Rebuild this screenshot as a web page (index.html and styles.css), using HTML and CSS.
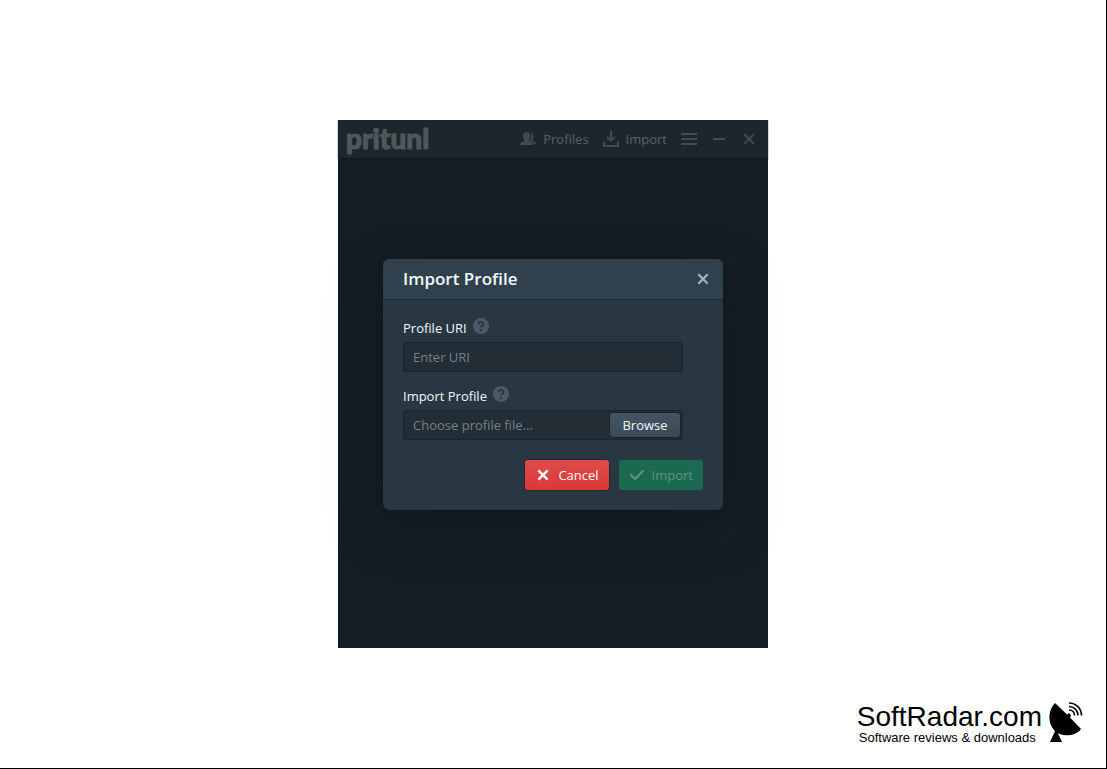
FILE: index.html
```html
<!DOCTYPE html>
<html lang="en">
<head>
    <meta charset="UTF-8">
    <meta name="viewport" content="width=device-width, initial-scale=1.0">
    <title>Pritunl Client</title>
    <link rel="stylesheet" href="styles.css">
</head>
<body>
    <main class="window">
        <header class="navbar">
            <h1 class="logo">pritunl</h1>
            <nav class="nav-items">
                <button type="button" class="nav-button">
                    <svg class="icon" width="16" height="16" viewBox="0 0 16 16">
                        <path d="M10.6 10.900c-1.500-.5-1.900-.9-1.900-1.600.5-.6.8-1.300 1-2.100.4-.3.6-.9.6-1.500 0-.4-.1-.8-.4-1V3.800C9.800 2.200 8.500 1.300 6.500 1.300S3.200 2.200 3.200 3.800v.9c-.3.2-.4.6-.4 1 0 .6.2 1.200.6 1.500.2.8.5 1.500 1 2.100 0 .7-.4 1.100-1.900 1.600C.9 11.500 0 12.200 0 14h13c0-1.800-.9-2.500-2.400-3.100z"/>
                        <path d="M10.200 2c2 0 3.100.9 3.100 2.400v.8c.6.6.4 1.800-.2 2.300-.2.8-.5 1.300-.9 1.700 0 .7.5 1 1.600 1.400 1.500.5 2.200 1.100 2.200 2.400h-2.300c-.3-1.300-1.200-2-2.700-2.600-.8-.3-1.100-.5-1.200-.8.4-.5.7-1.100.9-1.800.6-.6.8-1.900.3-2.700V3.700c0-.7-.3-1.200-.8-1.700z"/>
                    </svg>
                    Profiles
                </button>
                <button type="button" class="nav-button">
                    <svg class="icon" width="16" height="16" viewBox="0 0 16 16">
                        <path d="M7 0h2v7.200l2.300-2.200 1.400 1.400L8 11.100 3.300 6.400 4.700 5 7 7.200zM0 11h2v3h12v-3h2v5H0z"/>
                    </svg>
                    Import
                </button>
                <button type="button" class="nav-button" aria-label="Menu">
                    <svg class="icon" width="16" height="16" viewBox="0 0 16 16">
                        <path d="M0 2h16v2H0zM0 7h16v2H0zM0 12h16v2H0z"/>
                    </svg>
                </button>
                <button type="button" class="nav-button" aria-label="Minimize">
                    <svg class="icon" width="16" height="16" viewBox="0 0 16 16">
                        <path d="M2 7h12v2H2z"/>
                    </svg>
                </button>
                <button type="button" class="nav-button" aria-label="Close window">
                    <svg class="icon" width="16" height="16" viewBox="0 0 16 16">
                        <path d="M4 2.600l4 3.900 4-3.900L13.400 4 9.500 8l3.900 4-1.400 1.400-4-3.900-4 3.900L2.600 12l3.900-4-3.900-4z"/>
                    </svg>
                </button>
            </nav>
        </header>

        <section class="content">
            <form class="dialog">
                <div class="dialog-header">
                    <h2>Import Profile</h2>
                    <button type="button" class="dialog-close" aria-label="Close">
                        <svg class="icon" width="16" height="16" viewBox="0 0 16 16">
                            <path d="M4 2.600l4 3.900 4-3.900L13.400 4 9.500 8l3.900 4-1.400 1.400-4-3.900-4 3.900L2.600 12l3.900-4-3.900-4z"/>
                        </svg>
                    </button>
                </div>
                <div class="dialog-body">
                    <div class="form-group">
                        <div class="label-row">
                            <label for="uri">Profile URI</label>
                            <svg class="help" width="16" height="16" viewBox="0 0 16 16">
                                <circle cx="8" cy="8" r="8"/>
                                <path d="M5.500 6.300C5.500 3.200 10.500 3.200 10.500 6.100 10.500 7.900 8 7.900 8 9.600M8 11v2"/>
                            </svg>
                        </div>
                        <input type="text" id="uri" class="field" placeholder="Enter URI">
                    </div>
                    <div class="form-group">
                        <div class="label-row">
                            <label for="file">Import Profile</label>
                            <svg class="help" width="16" height="16" viewBox="0 0 16 16">
                                <circle cx="8" cy="8" r="8"/>
                                <path d="M5.500 6.300C5.500 3.200 10.500 3.200 10.500 6.100 10.500 7.900 8 7.900 8 9.600M8 11v2"/>
                            </svg>
                        </div>
                        <div class="field file-field">
                            <input type="file" id="file" hidden>
                            <span id="file-name">Choose profile file...</span>
                            <button type="button" class="browse" onclick="document.getElementById('file').click()">Browse</button>
                        </div>
                    </div>
                    <div class="dialog-footer">
                        <button type="button" class="button danger">
                            <svg class="icon" width="16" height="16" viewBox="0 0 16 16">
                                <path d="M4.200 2.500L8 6.200l3.800-3.700 1.700 1.700L9.800 8l3.700 3.800-1.700 1.700L8 9.800l-3.800 3.700-1.700-1.700L6.200 8 2.500 4.200z"/>
                            </svg>
                            Cancel
                        </button>
                        <button type="submit" class="button success" disabled>
                            <svg class="icon" width="16" height="16" viewBox="0 0 16 16">
                                <path d="M14 3c-.3 0-.5.1-.7.300L6 10.600 2.700 7.300C2.500 7.100 2.300 7 2 7c-.6 0-1 .4-1 1 0 .3.1.5.3.7l4 4c.2.2.4.3.7.3s.5-.1.7-.3l8-8c.2-.2.3-.4.3-.7 0-.6-.4-1-1-1z"/>
                            </svg>
                            Import
                        </button>
                    </div>
                </div>
            </form>
        </section>
    </main>

    <aside class="watermark">
        <div>
            <div class="site-name">SoftRadar.com</div>
            <div class="site-tagline">Software reviews &amp; downloads</div>
        </div>
        <svg width="34" height="42" viewBox="0 0 34 42">
            <path d="M6 1L18 12.500l2-1.500 2 2.500-1 2L32 27C27 34 13 36 6 29-2 21-1 8 6 1z"/>
            <path d="M7 27l6 13H1z"/>
            <path class="wave" d="M20 8c3.500 0 5.500 2.500 5.500 5.500M20 4.500c5 0 9 4 9 9M20 1c7 0 12.500 5.500 12.500 12.500"/>
        </svg>
    </aside>

    <script>
        document.getElementById('file').addEventListener('change', function () {
            if (this.files.length) {
                document.getElementById('file-name').innerText = this.files[0].name;
            }
        });
    </script>
</body>
</html>
```
FILE: styles.css
```css
* {
    box-sizing: border-box;
}
body {
    margin: 0;
    min-height: 100vh;
    display: flex;
    align-items: center;
    justify-content: center;
    position: relative;
    background-color: #fff;
    border-right: 1px solid #000;
    border-bottom: 1px solid #000;
    font-family: "Open Sans", "Noto Sans", sans-serif;
    font-size: 13px;
    line-height: 18px;
}
h1,
h2 {
    margin: 0;
}
button,
input {
    font: inherit;
}
button {
    display: flex;
    align-items: center;
    border: none;
    padding: 0;
    background: none;
    cursor: pointer;
}
.icon {
    fill: currentColor;
    flex: none;
}

/* App window */
.window {
    width: 430px;
    max-width: 100%;
    background-color: #161e25;
}
.navbar {
    display: flex;
    align-items: center;
    justify-content: space-between;
    height: 38px;
    padding: 0 11px 0 8px;
    background-color: #1e262d;
    box-shadow: 0 1px 1px #11181d;
}
.logo {
    padding-bottom: 2px;
    font-family: Lato, sans-serif;
    font-size: 28px;
    line-height: 34px;
    font-weight: 900;
    color: #50575a;
    -webkit-text-stroke: 1px #50575a;
}
.nav-items {
    display: flex;
    gap: 14px;
}
.nav-button {
    gap: 7px;
    color: #586067;
}
.nav-button .icon {
    color: #414b53;
}
.content {
    display: flex;
    align-items: center;
    justify-content: center;
    padding: 101px 20px 138px;
}

/* Import dialog */
.dialog {
    width: 340px;
    border-radius: 6px;
    background-color: #293742;
    box-shadow: 0 0 0 1px rgba(16, 22, 26, 0.2), 0 4px 8px rgba(16, 22, 26, 0.4), 0 18px 46px 6px rgba(16, 22, 26, 0.4);
}
.dialog-header {
    display: flex;
    align-items: center;
    justify-content: space-between;
    height: 40px;
    padding: 0 12px 0 20px;
    border-radius: 6px 6px 0 0;
    background-color: #30404d;
    box-shadow: 0 1px 0 #1d2933;
}
.dialog-header h2 {
    font-size: 17px;
    font-weight: 600;
    color: #f5f8fa;
}
.dialog-close {
    color: #a7b6c2;
}
.dialog-body {
    padding: 19px 20px 20px;
}
.form-group {
    width: 280px;
    margin-bottom: 14px;
}
.label-row {
    display: flex;
    gap: 6px;
    height: 24px;
    line-height: 20px;
    color: #f5f8fa;
}
.help circle {
    fill: #4c5a65;
}
.help path {
    fill: none;
    stroke: #293742;
    stroke-width: 2;
}
.field {
    display: block;
    width: 100%;
    height: 30px;
    padding: 0 9px;
    border: 1px solid #1b252d;
    border-radius: 3px;
    background-color: #222d35;
    color: #f5f8fa;
}
.field::placeholder {
    color: #74818a;
    opacity: 1;
}
.file-field {
    display: flex;
    align-items: center;
    justify-content: space-between;
    padding-right: 2px;
    color: #74818a;
}
.browse {
    justify-content: center;
    width: 70px;
    height: 24px;
    border-radius: 3px;
    background: linear-gradient(#435463, #394b59);
    box-shadow: 0 0 0 1px rgba(16, 22, 26, 0.4);
    color: #f5f8fa;
}
.dialog-footer {
    display: flex;
    justify-content: flex-end;
    gap: 10px;
    padding-top: 6px;
}
.button {
    gap: 7px;
    height: 30px;
    padding: 0 10px;
    border-radius: 3px;
}
.danger {
    background: linear-gradient(#e04b4b, #db3737);
    box-shadow: 0 0 0 1px rgba(16, 22, 26, 0.4);
    color: #fff;
}
.success {
    background-color: #1b6950;
    color: #609481;
    cursor: not-allowed;
}

/* Site mark in the corner */
.watermark {
    position: absolute;
    right: 23px;
    bottom: 24px;
    display: flex;
    gap: 7px;
    font-family: "Liberation Sans", Arial, sans-serif;
    color: #000;
}
.site-name {
    font-size: 28px;
    line-height: 30px;
}
.site-tagline {
    font-size: 13px;
    line-height: 12px;
    padding-left: 2px;
}
.wave {
    fill: none;
    stroke: #000;
    stroke-width: 1.6;
}
```
